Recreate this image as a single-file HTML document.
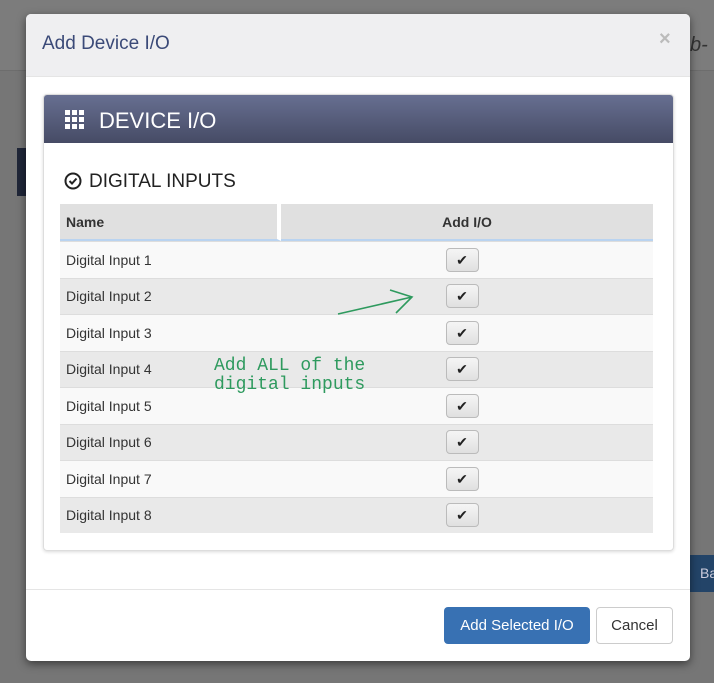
<!DOCTYPE html>
<html><head><style>
body{margin:0;width:714px;height:683px;background:#767676;position:relative;overflow:hidden;font-family:"Liberation Sans",sans-serif}
.abs{position:absolute}
.modal{left:26px;top:14px;width:664px;height:647px;background:#fff;border-radius:5px;box-shadow:0 3px 9px rgba(0,0,0,.5);overflow:hidden}
.mh{height:62px;background:#efeff1;border-bottom:1px solid #e5e5e5}
.panel{left:17px;top:80px;width:629px;height:455px;border:1px solid #ddd;border-radius:4px;box-shadow:0 1px 3px rgba(0,0,0,.15);overflow:hidden}
.ph{height:48px;background:linear-gradient(#676f91,#464b65);color:#fff;font-size:22px}
table{border-collapse:separate;border-spacing:0;position:absolute;left:16px;top:109px;width:593px;font-size:14px;color:#333}
th{background:#e0e0e0;height:33px;border-bottom:2px solid #b9d3f0;font-size:14px}
td{height:35.5px;border-top:1px solid #ddd;padding:0 6px}
tr:nth-child(even) td{background:#f9f9f9}
tr:nth-child(odd) td{background:#e9e9e9}
.cb{display:inline-block;width:31px;height:22px;border:1px solid #bbb;border-radius:4px;background:linear-gradient(#f5f5f5,#e0e0e0);vertical-align:middle;text-align:center;line-height:22px;font-size:14px;color:#222;margin-left:-10px}
</style></head><body>
<div class="abs" style="left:0;top:0;width:714px;height:70px;background:#7c7c7c;border-bottom:1px solid #6d6d6d"></div>
<div class="abs" style="left:690px;top:34px;font-size:20px;font-style:italic;color:#333">b-</div>
<div class="abs" style="left:17px;top:148px;width:20px;height:48px;background:#1f2638"></div>
<div class="abs" style="left:690px;top:555px;width:30px;height:37px;background:#234468;color:#ccd;font-size:14px;line-height:37px;padding-left:10px">Ba</div>
<div class="abs modal">
 <div class="mh"><span class="abs" style="left:16px;top:19px;font-size:19px;color:#3b4a78">Add Device I/O</span><span class="abs" style="left:633px;top:14px;font-size:20px;color:#bbb;font-weight:bold">×</span></div>
 <div class="abs panel">
  <div class="ph">
   <svg class="abs" style="left:21px;top:15px" width="19" height="19" viewBox="0 0 19 19" fill="#fff"><rect x="0" y="0" width="5" height="5"/><rect x="7" y="0" width="5" height="5"/><rect x="14" y="0" width="5" height="5"/><rect x="0" y="7" width="5" height="5"/><rect x="7" y="7" width="5" height="5"/><rect x="14" y="7" width="5" height="5"/><rect x="0" y="14" width="5" height="5"/><rect x="7" y="14" width="5" height="5"/><rect x="14" y="14" width="5" height="5"/></svg>
   <span class="abs" style="left:55px;top:13px">DEVICE I/O</span>
  </div>
  <svg class="abs" style="left:20px;top:77px" width="18" height="18" viewBox="0 0 18 18"><circle cx="9" cy="9" r="7.5" fill="none" stroke="#222" stroke-width="2"/><path d="M5.5 9l2.5 2.5 4.5-5" fill="none" stroke="#222" stroke-width="2"/></svg>
  <span class="abs" style="left:45px;top:76px;font-size:19px;color:#222">DIGITAL INPUTS</span>
  <table>
   <tr><th style="text-align:left;padding-left:6px;border-right:4px solid #fff;width:210px">Name</th><th>Add I/O</th></tr>
   <tr><td>Digital Input 1</td><td align="center"><span class="cb">✔</span></td></tr>
   <tr><td>Digital Input 2</td><td align="center"><span class="cb">✔</span></td></tr>
   <tr><td>Digital Input 3</td><td align="center"><span class="cb">✔</span></td></tr>
   <tr><td>Digital Input 4</td><td align="center"><span class="cb">✔</span></td></tr>
   <tr><td>Digital Input 5</td><td align="center"><span class="cb">✔</span></td></tr>
   <tr><td>Digital Input 6</td><td align="center"><span class="cb">✔</span></td></tr>
   <tr><td>Digital Input 7</td><td align="center"><span class="cb">✔</span></td></tr>
   <tr><td>Digital Input 8</td><td align="center"><span class="cb">✔</span></td></tr>
  </table>
 </div>
 <div class="abs" style="left:0;top:575px;width:664px;border-top:1px solid #e5e5e5"></div>
 <div class="abs" style="left:418px;top:593px;width:146px;height:37px;background:#3871b3;border-radius:4px;color:#fff;font-size:15px;line-height:37px;text-align:center">Add Selected I/O</div>
 <div class="abs" style="left:570px;top:593px;width:75px;height:35px;border:1px solid #ccc;border-radius:4px;color:#333;font-size:15px;line-height:35px;text-align:center">Cancel</div>
</div>
<div class="abs" style="left:214px;top:357px;font-family:'Liberation Mono',monospace;font-size:18px;line-height:19px;color:#2e9a5e">Add ALL of the<br>digital inputs</div>
<svg class="abs" style="left:330px;top:285px" width="90" height="35"><path d="M8 29L82 12M60 5L82 12L66 28" fill="none" stroke="#2e9a5e" stroke-width="1.6"/></svg>
</body></html>
